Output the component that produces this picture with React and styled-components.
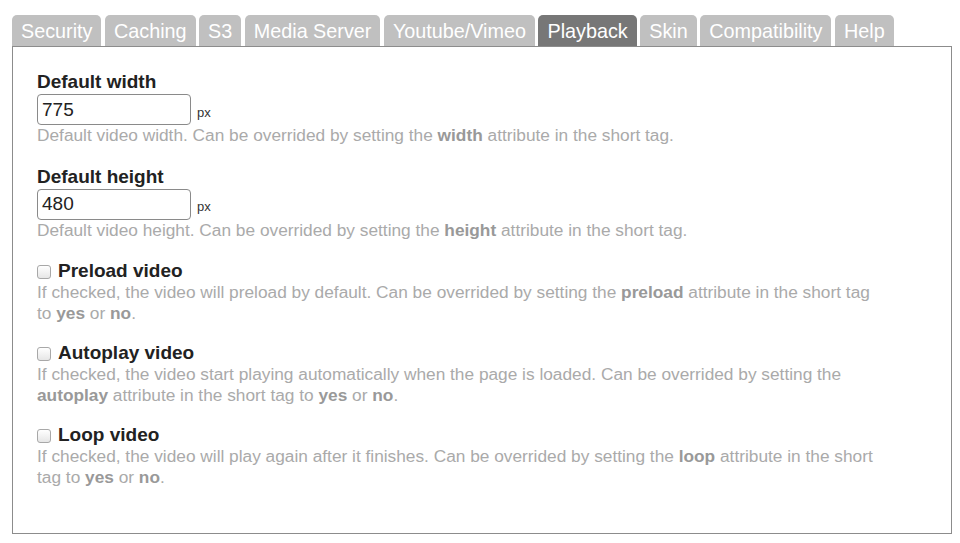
import React, { useState } from 'react';
import styled, { createGlobalStyle } from 'styled-components';

const GlobalStyle = createGlobalStyle`
  html, body {
    margin: 0;
    padding: 0;
    background: #ffffff;
  }
  body {
    font-family: "Liberation Sans", Arial, Helvetica, sans-serif;
  }
`;

const tabs = ['Security', 'Caching', 'S3', 'Media Server', 'Youtube/Vimeo', 'Playback', 'Skin', 'Compatibility', 'Help'];

const App = () => {
  const [active, setActive] = useState('Playback');
  const [width, setWidth] = useState('775');
  const [height, setHeight] = useState('480');

  return (
    <Page>
      <GlobalStyle />

      {/* Tab bar */}
      <TabBar>
        {tabs.map((t) => (
          <Tab key={t} $active={t === active} onClick={() => setActive(t)}>
            {t}
          </Tab>
        ))}
      </TabBar>

      {/* Playback settings */}
      <Panel>
        <Content>
          <Field>
            <Label>Default width</Label>
            <InputRow>
              <TextInput value={width} onChange={(e) => setWidth(e.target.value)} />
              <Unit>px</Unit>
            </InputRow>
            <Desc>
              Default video width. Can be overrided by setting the <b>width</b> attribute in the short tag.
            </Desc>
          </Field>

          <Field>
            <Label>Default height</Label>
            <InputRow>
              <TextInput value={height} onChange={(e) => setHeight(e.target.value)} />
              <Unit>px</Unit>
            </InputRow>
            <Desc>
              Default video height. Can be overrided by setting the <b>height</b> attribute in the short tag.
            </Desc>
          </Field>

          <Field $check>
            <CheckLabel>
              <Checkbox type="checkbox" />
              Preload video
            </CheckLabel>
            <Desc>
              If checked, the video will preload by default. Can be overrided by setting the <b>preload</b> attribute in the short tag to <b>yes</b> or <b>no</b>.
            </Desc>
          </Field>

          <Field $check>
            <CheckLabel>
              <Checkbox type="checkbox" />
              Autoplay video
            </CheckLabel>
            <Desc>
              If checked, the video start playing automatically when the page is loaded. Can be overrided by setting the <b>autoplay</b> attribute in the short tag to <b>yes</b> or <b>no</b>.
            </Desc>
          </Field>

          <Field $check>
            <CheckLabel>
              <Checkbox type="checkbox" />
              Loop video
            </CheckLabel>
            <Desc>
              If checked, the video will play again after it finishes. Can be overrided by setting the <b>loop</b> attribute in the short tag to <b>yes</b> or <b>no</b>.
            </Desc>
          </Field>
        </Content>
      </Panel>
    </Page>
  );
};

// Styled-components
const Page = styled.div`
  padding: 15px 8px 0 12px;
  width: 940px;
`;

const TabBar = styled.div`
  display: flex;
  gap: 3.5px;
`;

const Tab = styled.div`
  height: 31px;
  line-height: 32px;
  padding: 0 9px;
  font-size: 19.8px;
  color: #ffffff;
  background-color: ${(p) => (p.$active ? '#777777' : '#c0c0c0')};
  border-radius: 5px 5px 0 0;
  cursor: pointer;
  white-space: nowrap;
`;

const Panel = styled.div`
  box-sizing: border-box;
  width: 940px;
  height: 488px;
  border: 1px solid #8c8c8c;
  padding: 24px 24px 0 24px;
`;

const Content = styled.div`
  width: 850px;
`;

const Field = styled.div`
  margin-bottom: ${(p) => (p.$check ? '18px' : '19.5px')};
`;

const Label = styled.div`
  font-size: 19px;
  line-height: 22px;
  font-weight: bold;
  color: #222222;
`;

const CheckLabel = styled.label`
  display: flex;
  align-items: center;
  font-size: 19px;
  line-height: 22px;
  font-weight: bold;
  color: #222222;
`;

const Checkbox = styled.input`
  appearance: none;
  -webkit-appearance: none;
  box-sizing: border-box;
  width: 14px;
  height: 14px;
  margin: 1px 7px 0 0;
  border: 1px solid #a8a8a8;
  border-radius: 3px;
  background: linear-gradient(#ffffff, #e6e6e6);
`;

const InputRow = styled.div`
  display: flex;
  align-items: center;
  margin-top: 1px;
`;

const TextInput = styled.input`
  box-sizing: border-box;
  width: 154px;
  height: 31px;
  padding: 0 4px;
  border: 1px solid #8a8a8a;
  border-radius: 4px;
  font-family: "Liberation Sans", Arial, sans-serif;
  font-size: 19px;
  color: #222222;
  outline: none;
`;

const Unit = styled.span`
  margin-left: 6px;
  padding-top: 5px;
  font-size: 13px;
  color: #333333;
`;

const Desc = styled.div`
  font-size: 17.3px;
  line-height: 21px;
  color: #aaaaaa;

  b {
    color: #999999;
  }
`;

export default App;
